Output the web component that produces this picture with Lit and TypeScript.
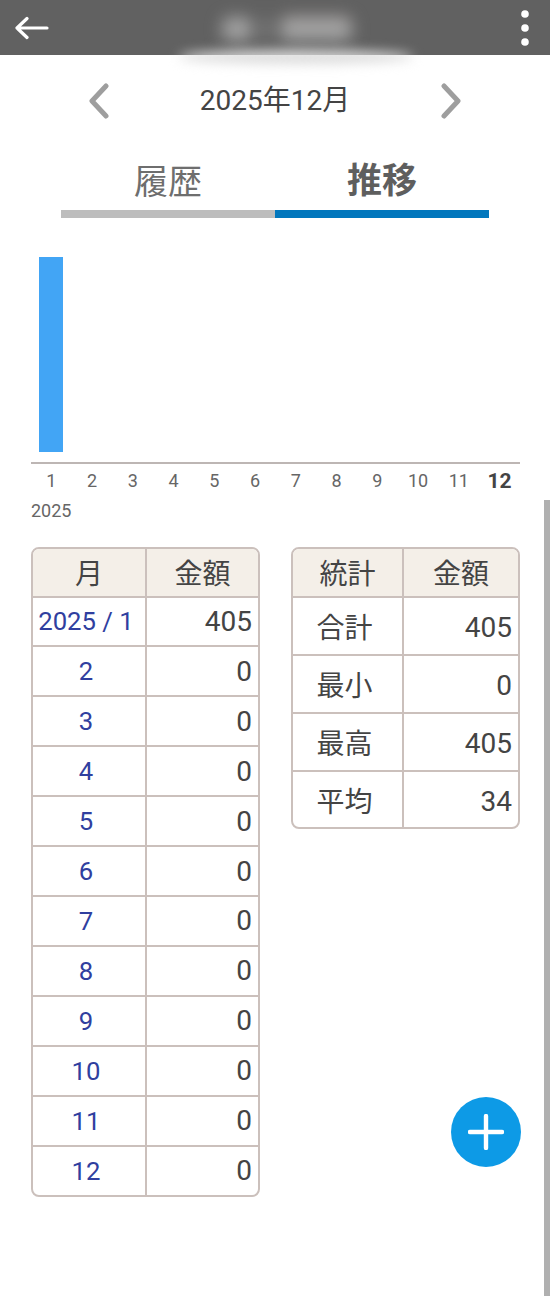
import { LitElement, html, css } from "lit";
import { customElement } from "lit/decorators.js";

const months = ["2025 / 1", "2", "3", "4", "5", "6", "7", "8", "9", "10", "11", "12"];
const stats = [["合計", "405"], ["最小", "0"], ["最高", "405"], ["平均", "34"]];

@customElement("app-root")
export class AppRoot extends LitElement {
  static styles = css`
    :host {
      display: block;
      position: relative;
      width: 550px;
      height: 1296px;
      overflow: hidden;
      background: #fff;
      color: #444;
      font-family: Roboto, "Noto Sans CJK JP", sans-serif;
    }
    .header {
      height: 55px;
      background: #616161;
      display: flex;
      align-items: center;
      justify-content: space-between;
      padding: 0 21px 0 15px;
    }
    .header svg { display: block; }
    .blur-title {
      position: absolute; left: 222px; top: 17px;
      display: flex; gap: 10px;
      filter: blur(8px);
    }
    .blur-title i { display: block; height: 24px; background: #a0a0a0; border-radius: 8px; }
    .blur-title i.a { width: 30px; }
    .blur-title i.b { width: 8px; background: #808080; }
    .blur-title i.c { width: 72px; }
    .blur-shadow {
      position: absolute; left: 178px; top: 50px; width: 236px; height: 14px;
      background: #dcdcdc; filter: blur(6px); border-radius: 50%;
    }
    .nav {
      height: 91px;
      display: flex;
      align-items: center;
      justify-content: space-between;
      padding: 0 88px;
      font-size: 28px;
    }
    .nav svg { display: block; }
    .nav span { margin-bottom: 6px; }
    .tabs { display: flex; margin: 0 61px; }
    .tab {
      flex: 1;
      text-align: center;
      font-size: 34px;
      line-height: 50px;
      height: 53px;
      color: #6e6e6e;
      border-bottom: 8px solid #bdbdbd;
      padding-top: 11px;
    }
    .tab.on { font-size: 35px; font-weight: 700; color: #5e5e5e; border-bottom-color: #0277bd; }
    .chart { margin: 39px 30px 0 31px; }
    .plot {
      height: 204.5px;
      padding-left: 8px;
      border-bottom: 2px solid #bdb6b4;
      box-sizing: content-box;
    }
    .bar { width: 24px; height: 195px; background: #42a5f5; }
    .axis { display: grid; grid-template-columns: repeat(12, 1fr); height: 34px; }
    .axis span {
      text-align: center; font-size: 18px; line-height: 34px; color: #666;
    }
    .axis span.cur { font-size: 21px; font-weight: 700; color: #444; }
    .year { font-size: 18px; line-height: 26px; color: #666; margin-left: 31px; }
    .tables {
      display: flex; gap: 31px; align-items: flex-start;
      margin: 23px 0 0 31px;
    }
    .tbl {
      width: 229px;
      box-sizing: border-box;
      border: 2px solid #cbc0bc;
      border-radius: 8px;
      overflow: hidden;
      display: grid;
    }
    .tbl.m { grid-template-columns: 114px 1fr; grid-template-rows: 47px repeat(12, 1fr); height: 650px; }
    .tbl.s { grid-template-columns: 111px 1fr; grid-template-rows: 47px repeat(4, 58px); height: 282px; }
    .c {
      display: flex; align-items: center; justify-content: center;
      font-size: 28px;
      border-top: 2px solid #cbc0bc;
      box-sizing: border-box;
    }
    .c.l { border-right: 2px solid #cbc0bc; }
    .c.h { background: #f4efe8; border-top: 0; }
    .c.lab { padding-right: 6px; }
    .c.mo { color: #303f9f; font-size: 25.7px; padding-right: 6px; }
    .c.n { justify-content: flex-end; padding-right: 6px; }
    .tbl.s .c.n { padding-top: 3px; }
    .bar-scroll {
      position: absolute; left: 544px; top: 500px; width: 6px; height: 796px; background: #b0b0b0;
    }
    .fab {
      position: absolute; left: 451px; top: 1097px; width: 70px; height: 70px;
      border-radius: 50%; background: #0d9ae6;
      display: flex; align-items: center; justify-content: center;
    }
  `;

  render() {
    return html`
      <div class="header">
        <svg width="34" height="24" viewBox="0 0 34 24" fill="none" stroke="#fff" stroke-width="3.2" stroke-linecap="round" stroke-linejoin="round">
          <path d="M2 12H32M12 2.500 2 12l10 9.500"/>
        </svg>
        <svg width="8" height="36" viewBox="0 0 8 36" fill="#fff">
          <circle cx="4" cy="4" r="3.800"/><circle cx="4" cy="18" r="3.800"/><circle cx="4" cy="32" r="3.800"/>
        </svg>
      </div>
      <div class="blur-title"><i class="a"></i><i class="b"></i><i class="c"></i></div>
      <div class="blur-shadow"></div>
      <div class="nav">
        <svg width="22" height="36" viewBox="0 0 22 36" fill="none" stroke="#9e9e9e" stroke-width="5" stroke-linecap="round" stroke-linejoin="round">
          <path d="M18 3 4 18l14 15"/>
        </svg>
        <span>2025年12月</span>
        <svg width="22" height="36" viewBox="0 0 22 36" fill="none" stroke="#9e9e9e" stroke-width="5" stroke-linecap="round" stroke-linejoin="round">
          <path d="M4 3l14 15L4 33"/>
        </svg>
      </div>
      <div class="tabs">
        <div class="tab">履歴</div>
        <div class="tab on">推移</div>
      </div>
      <div class="chart">
        <div class="plot"><div class="bar"></div></div>
        <div class="axis">
          ${months.map((_, i) => html`<span class=${i === 11 ? "cur" : ""}>${i + 1}</span>`)}
        </div>
      </div>
      <div class="year">2025</div>
      <div class="tables">
        <div class="tbl m">
          <div class="c h l">月</div><div class="c h">金額</div>
          ${months.map((m, i) => html`
            <div class="c l mo">${m}</div>
            <div class="c n">${i === 0 ? "405" : "0"}</div>`)}
        </div>
        <div class="tbl s">
          <div class="c h l">統計</div><div class="c h">金額</div>
          ${stats.map(([k, v]) => html`
            <div class="c l lab">${k}</div>
            <div class="c n">${v}</div>`)}
        </div>
      </div>
      <div class="bar-scroll"></div>
      <div class="fab">
        <svg width="36" height="36" viewBox="0 0 36 36" stroke="#fff" stroke-width="4.400" stroke-linecap="round">
          <path d="M18 2V34M2 18H34"/>
        </svg>
      </div>
    `;
  }
}
